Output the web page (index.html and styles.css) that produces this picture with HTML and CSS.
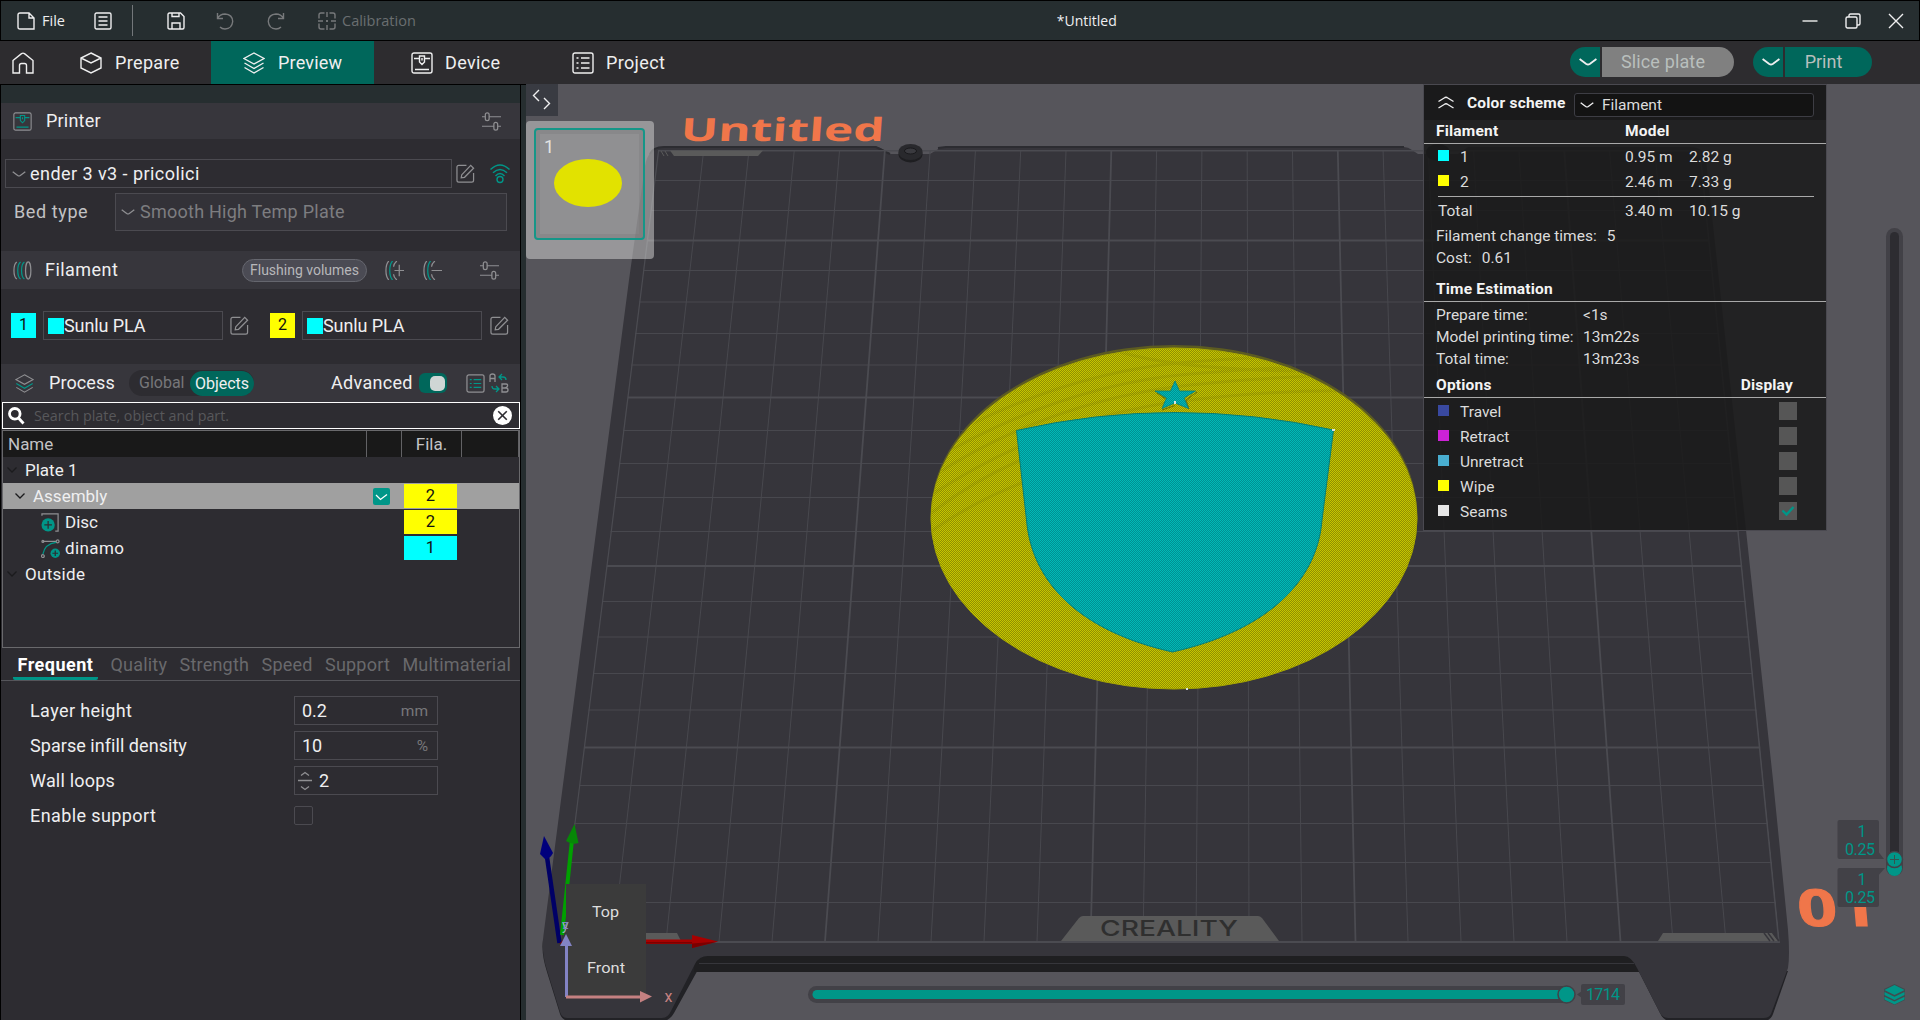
FILE: index.html
```html
<!DOCTYPE html>
<html lang="en">
<head>
<meta charset="utf-8">
<title>*Untitled</title>
<link rel="stylesheet" href="styles.css">
</head>
<body>
<svg width="0" height="0" class="defs">
  <defs>
    <symbol id="edit" viewBox="0 0 20 20"><path d="M11 1.500H3Q1 1.500 1 3.500V17Q1 19 3 19H16.500Q18.500 19 18.500 17V9.500M6 11.500L15.500 1.500L18.500 4.500L9 14L5.500 14.500Z" /></symbol>
    <symbol id="sliders" viewBox="0 0 20 20"><path d="M0 5H3M8 5H20M3.500 3Q3.500 1 5.500 1T7.500 3V7Q7.500 9 5.500 9T3.500 7ZM0 15H12M17 15H20M12.500 13Q12.500 11 14.500 11T16.500 13V17Q16.500 19 14.500 19T12.500 17Z"/></symbol>
    <symbol id="chev" viewBox="0 0 14 6"><path d="M.7.8L5.700 4.500Q7 5.300 8.300 4.500L13.300.8"/></symbol>
    <symbol id="layers" viewBox="0 0 22 22"><path d="M11 1L21 6.500L11 12L1 6.500Z"/><path class="accent" d="M1.500 11L11 16.500L20.500 11"/><path d="M1.500 15.500L11 21L20.500 15.500"/></symbol>
    <symbol id="machine" viewBox="0 0 22 22"><rect x="1" y="1" width="20" height="20" rx="2"/><path class="accent" d="M4 17.500H18M3 6.500H8.500M13.500 6.500H19M8.500 4H13.500V10L11 12.500L8.500 10ZM11 6V8.500"/></symbol>
    <symbol id="tree" viewBox="0 0 10 6"><path d="M.5.5L5 5L9.500.5"/></symbol>
  </defs>
</svg>

<header class="titlebar">
  <svg class="ic file-ic" viewBox="0 0 18 18"><path d="M1 3Q1 1 3 1H12L17 6V17H3Q1 17 1 15ZM12 1V6H17"/></svg>
  <span class="file">File</span>
  <svg class="ic menu-ic" viewBox="0 0 18 18"><rect x="1" y="1" width="16" height="16" rx="1.500"/><path d="M4.500 5H13.500M4.500 9H13.500M4.500 13H13.500"/></svg>
  <i class="sep"></i>
  <svg class="ic save-ic" viewBox="0 0 18 18"><path d="M1 2.500Q1 1 2.500 1H13.500L17 4.500V15.500Q17 17 15.500 17H2.500Q1 17 1 15.500ZM5 1V4.500H12V1M5 17V11H13V17"/></svg>
  <svg class="ic dim undo-ic" viewBox="0 0 18 18"><path d="M1.500 1V6.500H7M1.500 6.500Q4 2 9 2Q16.500 2.500 16.700 9.500Q16 16.800 9 17Q6 17 4 15"/></svg>
  <svg class="ic dim redo-ic" viewBox="0 0 18 18"><path d="M16.500 1V6.500H11M16.500 6.500Q14 2 9 2Q1.500 2.500 1.300 9.500Q2 16.800 9 17Q12 17 14 15"/></svg>
  <svg class="ic dim cal-ic" viewBox="0 0 18 18"><path d="M6.500 1H3Q1 1 1 3V6.500M11.500 1H15Q17 1 17 3V6.500M1 11.500V15Q1 17 3 17H6.500M17 11.500V15Q17 17 15 17H11.500M9 0V5M9 13V18M0 9H5M13 9H18M8 9H10M9 8V10"/></svg>
  <span class="cal">Calibration</span>
  <span class="doc">*Untitled</span>
  <div class="winbtns">
    <svg class="ic" viewBox="0 0 16 16"><path d="M0.500 8H15.500"/></svg>
    <svg class="ic" viewBox="0 0 16 16"><rect x="1" y="4" width="11" height="11" rx="1.500"/><path d="M4 4V2.500Q4 1 5.500 1H13.500Q15 1 15 2.500V10.500Q15 12 13.500 12H12"/></svg>
    <svg class="ic" viewBox="0 0 16 16"><path d="M1 1L15 15M15 1L1 15"/></svg>
  </div>
</header>

<nav class="tabs">
  <div class="tab home"><svg class="ic" viewBox="0 0 22 22"><path d="M1 8.500L9.500 1.600Q11 .6 12.500 1.600L21 8.500V21H14.500V13.500Q14.500 11.500 12.500 11.500H9.500Q7.500 11.500 7.500 13.500V21H1Z"/></svg></div>
  <div class="tab prep"><svg class="ic" viewBox="0 0 22 22"><path d="M11 1L21 6V16L11 21L1 16V6ZM1 6L11 11L21 6"/></svg><span>Prepare</span></div>
  <div class="tab active"><svg class="ic"><use href="#layers"/></svg><span>Preview</span></div>
  <div class="tab dev"><svg class="ic"><use href="#machine"/></svg><span>Device</span></div>
  <div class="tab proj"><svg class="ic" viewBox="0 0 22 22"><rect x="1" y="1" width="20" height="20" rx="2"/><path d="M4.500 6H6.500M9 6H17.500M4.500 11H6.500M9 11H17.500M4.500 16H6.500M9 16H17.500"/></svg><span>Project</span></div>
  <div class="actions">
    <div class="split"><b><svg class="ic"><use href="#chev"/></svg></b><span class="slice">Slice plate</span></div>
    <div class="split"><b><svg class="ic"><use href="#chev"/></svg></b><span class="print">Print</span></div>
  </div>
</nav>

<main class="body">
  <aside class="side">
    <div class="strip"></div>
    <div class="head printer">
      <svg class="ic g m19"><use href="#machine"/></svg><span>Printer</span><svg class="ic g m19 end"><use href="#sliders"/></svg>
    </div>
    <div class="row prow">
      <div class="box pbox"><svg class="ic g cv"><use href="#chev"/></svg><span>ender 3 v3 - pricolici</span></div>
      <svg class="ic g m19"><use href="#edit"/></svg>
      <svg class="ic wifi" viewBox="0 0 20 20"><path d="M.5 5.500Q10-3.500 19.500 5.500M3 8.800Q10 2 17 8.800M5.500 12Q10 7 14.500 12"/><circle cx="10" cy="15.500" r="3"/></svg>
    </div>
    <div class="row bedrow"><label>Bed type</label><div class="box bedbox"><svg class="ic g cv"><use href="#chev"/></svg><span>Smooth High Temp Plate</span></div></div>
    <div class="head fil">
      <svg class="ic g m19" viewBox="0 0 20 20"><path d="M4 1Q1 3 1 10T4 19"/><path class="accent" d="M8 1Q5 3 5 10T8 19M12 1Q9 3 9 10T12 19"/><ellipse cx="16" cy="10" rx="2.800" ry="9"/></svg>
      <span>Filament</span>
      <span class="flush">Flushing volumes</span>
      <svg class="ic g m19 addf" viewBox="0 0 20 20"><path d="M4 0Q1 3 1 10T4 20"/><path class="accent" d="M8 0Q5 3 5 10T8 20"/><path d="M12.500 0Q9 3 9 6M9 14Q9 17 12.500 20M10 10H20M15 4V16"/></svg>
      <svg class="ic g m19 delf" viewBox="0 0 20 20"><path d="M4 0Q1 3 1 10T4 20"/><path class="accent" d="M8 0Q5 3 5 10T8 20"/><path d="M12.500 0Q9 3 9 6M9 14Q9 17 12.500 20M9 10H20"/></svg>
      <svg class="ic g m19 slf"><use href="#sliders"/></svg>
    </div>
    <div class="row frow">
      <b class="sw cy">1</b><div class="box fb"><i></i><span>Sunlu PLA</span></div><svg class="ic g m19"><use href="#edit"/></svg>
      <b class="sw ye">2</b><div class="box fb"><i></i><span>Sunlu PLA</span></div><svg class="ic g m19"><use href="#edit"/></svg>
    </div>
    <div class="head proc">
      <svg class="ic g m19"><use href="#layers"/></svg><span>Process</span>
      <div class="seg"><span>Global</span><span class="on">Objects</span></div>
      <span class="adv">Advanced</span><i class="toggle"></i>
      <svg class="ic g m19 lst" viewBox="0 0 20 20"><rect x="1" y="1" width="18" height="18" rx="2"/><path class="accent" d="M4 6H6M8 6H16M4 10H6M8 10H16M4 14H6M8 14H16"/></svg>
      <svg class="ic g m20" viewBox="0 0 20 20"><path d="M1 9V3Q1 1 3.500 1T6 3V9M1 5.500H6M13 11H17Q19 11 18.500 13Q18 15 13.500 15H17Q19 15 19 17Q19 19 17 19H13Z"/><path class="accent" d="M13 1L10 4L13 7M10 4H14Q17 4 17 7M7 13L10 16L7 19M10 16H6Q3 16 3 13"/></svg>
    </div>
    <div class="search">
      <svg viewBox="0 0 17 18" class="mag"><circle cx="6.800" cy="6.800" r="5.300"/><path d="M10.500 11L15.500 16.500"/></svg>
      <span>Search plate, object and part.</span>
      <svg viewBox="0 0 20 20" class="clr"><circle cx="10" cy="10" r="10"/><path d="M5.500 5.500L14.500 14.500M14.500 5.500L5.500 14.500"/></svg>
    </div>
    <div class="table">
      <div class="tr th"><span class="c1">Name</span><span class="c2"></span><span class="c3">Fila.</span><span class="c4"></span></div>
      <div class="tr l0"><svg class="tv"><use href="#tree"/></svg><span class="c1">Plate 1</span></div>
      <div class="tr l1 sel"><svg class="tv"><use href="#tree"/></svg><span class="c1">Assembly</span><svg class="chk" viewBox="0 0 17 17"><rect width="17" height="17" rx="2"/><path d="M3 7L7.500 11.500L14 6.500"/></svg><b class="ye">2</b></div>
      <div class="tr l2"><svg class="ic g m19" viewBox="0 0 20 20"><path d="M1 3V1H18V19H15"/><circle class="dot" cx="7.500" cy="12.500" r="7"/><path class="dk" d="M3.500 12.500H11.500M7.500 8.500V16.500"/></svg><span class="c1">Disc</span><b class="ye">2</b></div>
      <div class="tr l2"><svg class="ic g m19" viewBox="0 0 20 20"><path d="M2 2.500H16"/><circle cx="2" cy="2.500" r="1"/><circle cx="17.500" cy="2.500" r="1.500"/><circle cx="2" cy="18" r="1.500"/><path class="accent" d="M2 16Q4 5 16 3.500"/><circle class="dot" cx="15" cy="15" r="5"/><path class="dk" d="M12 15H18M15 12V18"/></svg><span class="c1 sp2">dinamo</span><b class="cy">1</b></div>
      <div class="tr l0"><svg class="tv"><use href="#tree"/></svg><span class="c1 sp1">Outside</span></div>
    </div>
    <div class="ptabs"><span class="on">Frequent</span><span>Quality</span><span>Strength</span><span>Speed</span><span>Support</span><span>Multimaterial</span></div>
    <div class="form">
      <div class="fr"><label class="sp2">Layer height</label><div class="box in"><span>0.2</span><em>mm</em></div></div>
      <div class="fr"><label class="sp0">Sparse infill density</label><div class="box in"><span>10</span><em>%</em></div></div>
      <div class="fr"><label>Wall loops</label><div class="box in spin"><svg class="ic g" viewBox="0 0 14 20"><path d="M3 4.500L7 1.500L11 4.500M0 9.500H14M3 15.500L7 18.500L11 15.500"/></svg><span>2</span></div></div>
      <div class="fr"><label class="sp2">Enable support</label><i class="cb"></i></div>
    </div>
  </aside>

  <section class="view">
    <svg class="scene" viewBox="526 84 1394 936">
      <defs>
        <pattern id="py" width="2" height="2" patternUnits="userSpaceOnUse"><rect width="2" height="2" fill="#8f8f00"/><path fill="#c6c500" d="M0 0h1v1H0zM1 1h1v1H1z"/></pattern>
        <pattern id="pc" width="2" height="2" patternUnits="userSpaceOnUse"><rect width="2" height="2" fill="#008f92"/><path fill="#00bab6" d="M0 0h1v1H0zM1 1h1v1H1z"/></pattern>
        <clipPath id="bed"><path d="M658 150L1700.500 150L1780 943H559.500Z"/></clipPath>
        <clipPath id="disc"><ellipse cx="1174" cy="518.500" rx="242" ry="169.500"/></clipPath>
      </defs>
      <path fill="#222226" d="M543 940Q541 953 547 972L560 1014Q562 1020 568 1021H664Q670 1020 674 1013L700 966L1636 966L1660 1013Q1663 1020 1669 1021H1765Q1771 1020 1773 1014L1788 971Z"/>
      <path fill="#1f1f21" d="M694 956H1640V972H694Z"/>
      <path stroke="#36363b" d="M699 963.500H1634"/>
      <path fill="#36353b" d="M645 166Q648 147 664 147H876Q880 147 884 150L890 154H930L940 148Q943 147 948 147H1404Q1408 147 1412 150L1418 154H1458L1468 147H1690Q1704 147 1706 160L1773 780L1788 930Q1790 955 1788 968L1771 1014Q1769 1018 1764 1018H1668Q1663 1018 1660 1013L1637 968Q1631 956 1624 956H708Q699 956 695 964L671 1011Q668 1018 662 1018H567Q562 1018 560 1012L547 970Q541 952 543.500 935L561 800L629 280Z"/>
      <path stroke="#2c2c31" stroke-width="2" fill="none" d="M650 154Q653 147 664 147H876L890 154M938 148L946 147H1404"/>
      <g clip-path="url(#bed)" fill="none" stroke="#48484e">
        <path d="M703.600 151L613 941.500M748.900 151L666 941.500M794.200 151L719 941.500M839.500 151L772 941.500M930.100 151L878 941.500M975.400 151L931 941.500M1020.700 151L984 941.500M1066 151L1037 941.500M1156.600 151L1143 941.500M1201.900 151L1196 941.500M1247.200 151L1249 941.500M1292.500 151L1302 941.500M1383.100 151L1408 941.500M1428.400 151L1461 941.500M1473.700 151L1514 941.500M1519 151L1567 941.500M1609.600 151L1673 941.500M1654.900 151L1726 941.500"/>
        <path d="M540 180.500H1800M540 210.500H1800M540 270.500H1800M540 302H1800M540 333.500H1800M540 365H1800M540 430.500H1800M540 463.500H1800M540 497.500H1800M540 531.500H1800M540 601.500H1800M540 637H1800M540 673.500H1800M540 710H1800M540 785.500H1800M540 823.500H1800M540 862.500H1800M540 902.500H1800"/>
        <path stroke-width="1.800" stroke="#4b4b51" d="M658.300 151L560 941.500M884.800 151L825 941.500M1111.300 151L1090.500 941.500M1337.800 151L1355.500 941.500M1564.300 151L1620.500 941.500M1700.200 151L1779 941.500M540 150.500H1800M540 240.500H1800M540 397.500H1800M540 566H1800M540 747.500H1800M540 942H1800"/>
      </g>
      <path fill="#5a5a5a" d="M670 150.500H763L758 156H674Z"/>
      <path stroke="#5a5a5a" d="M661 151L664 156M665 151L668 156"/>
      <ellipse cx="910.500" cy="154" rx="12" ry="8.500" fill="#1e1e21"/><ellipse cx="910.500" cy="152" rx="12" ry="8" fill="#29292d"/><ellipse cx="910.500" cy="151" rx="6" ry="3" fill="#3a3a3f" stroke="#1a1a1d"/>
      <ellipse cx="1438" cy="152.500" rx="12" ry="8.500" fill="#222226"/>
      <path fill="#5a5a5a" d="M1061 941L1079 918Q1081 916 1083 916H1258Q1260 916 1262 918L1279 941ZM645 933H677L681 941H645ZM1658 941L1663 933H1772L1778 941Z"/>
      <path stroke="#36353b" stroke-width="1.500" d="M1764 933L1770 941M1768 933L1774 941M1773 933L1779 941"/>
      <text x="1100" y="935.500" class="brand" textLength="138" lengthAdjust="spacingAndGlyphs">CREALITY</text>
      <text class="t3d" transform="translate(680 141) skewX(-4)" font-size="32" textLength="204" lengthAdjust="spacingAndGlyphs">Untitled</text>
      <text class="t3d" transform="translate(1799 925.500) skewX(5)" font-size="51" stroke="#f0764a" textLength="79" lengthAdjust="spacingAndGlyphs">01</text>

      <ellipse cx="1174" cy="516" rx="243.500" ry="171" fill="#5c5b22"/>
      <ellipse cx="1174" cy="518.500" rx="243" ry="170.500" fill="url(#py)" stroke="#a5a500" stroke-width="1"/>
      <g clip-path="url(#disc)" fill="none" stroke="#6e6e00" stroke-width="3" opacity=".16"><path d="M930 478Q1050 400 1190 385T1430 380M930 496Q1050 416 1190 400T1430 396M930 462Q1060 385 1190 374T1430 366M930 446Q1060 372 1190 362T1430 354M1120 352Q1200 376 1400 370M930 514Q1000 460 1080 440M930 532Q990 490 1060 470"/></g>
      <path fill="url(#pc)" stroke="#067f78" d="M1016.500 430.500Q1095 412.500 1175 412.500T1333.500 430L1322 520C1317 585 1262 632 1172.500 652C1083 632 1032 585 1026.500 520Z"/>
      <path fill="none" stroke="#6e7100" stroke-width="1" d="M1162 410L1175 405.500M1157 393L1165 398.500M1189 409L1186 400L1197 392"/>
      <path fill="url(#pc)" stroke="#067f78" stroke-width=".8" d="M1175 381L1179.500 391H1195.500L1184 398L1188.500 408.500L1175 403L1162 408.500L1166.500 398L1155 391H1170.500Z"/>
      <path fill="#d9e4e0" d="M1174 401h2v3h-2zM1332 429h3v2h-3zM1186 688h2v2h-2z"/>

      <path stroke="#000066" stroke-width="4.500" d="M559.500 943L547 857"/><path fill="#00007c" d="M544 836L553 853Q550 859 545 859L540 854Z"/>
      <path stroke="#00a000" stroke-width="4" d="M562 935L572 840"/><path fill="#078707" d="M574.500 824L578.500 843Q572 845 566 841Z"/>
      <path fill="#a80000" d="M646 939.500H692V935L718 941.500L692 948V944H646Z"/><path fill="#7c0000" d="M646 942H692V948L718 941.500L692 943.500H646ZM559 944l4-4v3z"/>
      <path fill="#3b3b3b" d="M566 884H646V997H566Z"/>
      <path stroke="#8383c4" stroke-width="3" d="M566.500 997V944"/><path fill="#8383c4" d="M566 934L572 946H560Z"/>
      <path stroke="#c58181" stroke-width="3" d="M566 997H642"/><path fill="#c58181" d="M652 996.500L640 991V1002.500Z"/>
      <text class="cube" x="592" y="916.500" textLength="27" lengthAdjust="spacingAndGlyphs">Top</text>
      <text class="cube" x="587" y="973" textLength="38" lengthAdjust="spacingAndGlyphs">Front</text>
      <text x="664.500" y="1002" font-size="16" fill="#c58181">x</text><text x="562" y="930" font-size="14" fill="#9db8b8">y</text><text x="562.500" y="929" font-size="12" fill="#8383c4">z</text>

      <g class="hs"><rect x="808" y="986" width="767" height="17" rx="8.500" fill="#424147"/><rect x="812.500" y="990" width="756" height="9" rx="4.500" fill="#009688"/><circle cx="1566.500" cy="994.500" r="8.500" fill="#009688" stroke="#424147" stroke-width="1.500"/>
      <path fill="#424147" d="M1577 994.500L1582 991V998Z"/><rect x="1581" y="984" width="44" height="21" rx="2" fill="#424147"/><text x="1586" y="1000" class="tv2" textLength="34">1714</text></g>
      <rect x="1886" y="228" width="17" height="648" rx="8.500" fill="#424147"/><rect x="1890" y="232" width="9" height="636" rx="4.500" fill="#2d2c31"/>
      <circle cx="1894.500" cy="868.500" r="7.500" fill="#009688"/><circle cx="1894.500" cy="859.500" r="8" fill="#009688" stroke="#424147" stroke-width="1.500"/><path stroke="#35534f" d="M1890 859.500H1899M1894.500 855V864"/>
      <path fill="#424147" d="M1877 850L1884 859H1877ZM1877 877L1885 868H1877Z"/><rect x="1837.500" y="820" width="41.500" height="39" rx="2" fill="#424147"/><rect x="1837.500" y="868" width="41.500" height="39" rx="2" fill="#424147"/>
      <g class="tv2"><text x="1857.500" y="836.500">1</text><text x="1845" y="854.500" textLength="30">0.25</text><text x="1857.500" y="884.500">1</text><text x="1845" y="902.500" textLength="30">0.25</text></g>
      <path fill="#424b4e" d="M1894.500 984L1905 989V1000L1894.500 1005L1884 1000V989Z"/>
      <path fill="#009688" d="M1894.500 985L1904.500 990L1894.500 995L1884.500 990ZM1884.500 992L1894.500 996.700L1904.500 992V995L1894.500 1000L1884.500 995ZM1884.500 996.700L1894.500 1001.500L1904.500 996.700V999.500L1894.500 1004.500L1884.500 999.500Z"/>
    </svg>
    <div class="collapse"><svg class="ic" viewBox="0 0 32 32"><path d="M13 6L7.500 11.500L13 17M18 14L23.500 19.500L18 25"/></svg></div>
    <div class="thumb"><div class="inner"><span>1</span><i></i></div></div>

    <div class="legend">
      <div class="lt"><svg class="ic" viewBox="0 0 16 13"><path d="M.5 5.500L7 1.500Q8 1 9 1.500L15.500 5.500M.5 12L7 8Q8 7.500 9 8L15.500 12"/></svg><b>Color scheme</b><div class="ls"><svg class="ic"><use href="#chev"/></svg><span>Filament</span></div></div>
      <div class="lh fm"><b>Filament</b><b>Model</b></div>
      <div class="lr"><i class="cy"></i><span class="n">1</span><span class="v">0.95 m</span><span>2.82 g</span></div>
      <div class="lr last"><i class="ye"></i><span class="n">2</span><span class="v">2.46 m</span><span>7.33 g</span></div>
      <div class="lr tot"><span class="n">Total</span><span class="v">3.40 m</span><span>10.15 g</span></div>
      <div class="lp fct"><span>Filament change times:</span><span>5</span></div>
      <div class="lp"><span>Cost:</span><span>0.61</span></div>
      <div class="lh te"><b>Time Estimation</b></div>
      <div class="tm"><span>Prepare time:</span><span>&lt;1s</span></div>
      <div class="tm"><span>Model printing time:</span><span>13m22s</span></div>
      <div class="tm"><span>Total time:</span><span>13m23s</span></div>
      <div class="lh op"><b>Options</b><b>Display</b></div>
      <div class="lr o"><i class="travel"></i><span class="n">Travel</span><u></u></div>
      <div class="lr o"><i class="retract"></i><span class="n">Retract</span><u></u></div>
      <div class="lr o"><i class="unretract"></i><span class="n">Unretract</span><u></u></div>
      <div class="lr o"><i class="ye"></i><span class="n">Wipe</span><u></u></div>
      <div class="lr o"><i class="seams"></i><span class="n">Seams</span><u><svg viewBox="0 0 18 18"><path d="M3.500 8.500L7.500 12.500L14.500 5"/></svg></u></div>
    </div>
  </section>
</main>
</body>
</html>
```
FILE: styles.css
```css
* { box-sizing: border-box; }
body { margin: 0; width: 1920px; height: 1020px; overflow: hidden; background: #2d2c31; color: #efeff0; font: 18px/24px Roboto, "Noto Sans", sans-serif; display: flex; flex-direction: column; }
svg { display: block; flex: none; }
i, em { font-style: normal; }
span, label, b { white-space: nowrap; }
.defs { position: absolute; }
.ic { fill: none; stroke: #efeff0; stroke-width: 1.4; }
.ic.g { stroke: #8f8f92; stroke-width: 1.3; --accent: #009688; }
.ic.dim { stroke: #77797b; }
.accent { stroke: var(--accent); }
.m19 { width: 19px; height: 19px; }
.m20 { width: 20px; height: 20px; }
.cy { background: #00ffff; }
.ye { background: #ffff00; }

.titlebar { height: 41px; flex: none; background: #262e30; border: 1px solid #000; display: flex; align-items: center; position: relative; font: 15px/20px "Open Sans", "Noto Sans", sans-serif; padding-left: 16px; }
.titlebar > .ic { width: 18px; height: 18px; }
.file { margin-left: 7px; width: 53px; font-size: 14.500px; }
.menu-ic { margin-left: -1px; }
.sep { width: 1px; height: 31px; background: #73777a; margin: 0 34px 0 20px; }
.undo-ic { margin-left: 31px; }
.redo-ic { margin-left: 33px; }
.cal-ic { margin-left: 33px; }
.cal { margin-left: 6px; color: #6a6e70; font-size: 14.500px; }
.doc { margin-left: 641px; font-size: 14px; }
.winbtns { margin-left: auto; display: flex; gap: 27px; padding-right: 15px; }
.winbtns .ic { width: 16px; height: 16px; }

.tabs { height: 43px; flex: none; background: #2d2c2f; display: flex; }
.tab { display: flex; align-items: center; }
.tab .ic { width: 22px; height: 22px; margin-right: 13px; }
.tab span { letter-spacing: .35px; }
.home { width: 80px; padding-left: 12px; }
.prep { width: 131px; }
.active { width: 163px; background: #00675b; padding-left: 32px; }
.active span { letter-spacing: .2px; }
.dev { width: 198px; padding-left: 37px; }
.dev .ic, .proj .ic { margin-right: 12px; }
.actions { margin-left: auto; display: flex; gap: 19px; padding: 6px 48px 0 0; }
.split { display: flex; gap: 2px; height: 30px; color: #b9bfbd; }
.split b { width: 30px; background: #00675b; border-radius: 15px 0 0 15px; display: flex; align-items: center; padding-left: 8px; }
.split b .ic { width: 20px; height: 8px; }
.split span { line-height: 30px; text-align: center; border-radius: 0 15px 15px 0; }
.slice { width: 132px; background: #808080; padding-right: 10px; letter-spacing: .15px; }
.print { width: 87px; background: #00675b; padding-right: 10px; }

.body { display: flex; flex: 1; }
.side { width: 526px; border: solid #000; border-width: 1px 0 0 1px; display: flex; flex-direction: column; background: linear-gradient(90deg, transparent 519px, #000 519px, #000 520px, #262e30 520px); padding-right: 6px; }
.strip { height: 18px; background: #262e30; }
.head { height: 38px; background: #37363c; display: flex; align-items: center; padding-left: 12px; }
.head.printer { height: 36px; }
.head > span:first-of-type { margin-left: 13px; letter-spacing: .2px; }
.head.printer > span:first-of-type { margin-left: 14px; }
.end { margin-left: auto; margin-right: 19px; }
.box { border: 1px solid #4b4a50; height: 29px; display: flex; align-items: center; }
.cv { width: 14px; height: 6px; }
.prow { margin: 20px 0 5px 4px; display: flex; align-items: center; }
.pbox { width: 447px; padding-left: 6px; margin-right: 4px; gap: 4px; }
.pbox span { letter-spacing: .45px; }
.wifi { width: 20px; height: 20px; margin-left: 15px; stroke: #009688; }
.bedrow { display: flex; align-items: center; padding-left: 13px; height: 38px; color: #c2c2c4; }
.bedrow label { width: 101px; letter-spacing: .6px; }
.bedbox { width: 392px; height: 38px; background: #333238; color: #7d7d80; padding-left: 5px; gap: 5px; letter-spacing: .25px; }
.fil { margin-top: 20px; }
.fil > span:first-of-type { width: 197px; letter-spacing: .45px; }
.flush { border: 1px solid #65666e; background: #4b4b54; color: #b7b7ba; border-radius: 12px; height: 23px; width: 125px; font-size: 14px; line-height: 21px; text-align: center; }
.addf { margin-left: 18px; }
.delf { margin-left: 19px; }
.slf { margin-left: 38px; }
.frow { margin: 22px 0 24px 10px; display: flex; align-items: center; height: 29px; }
.sw { width: 25px; height: 25px; color: #111; font-weight: 400; font-size: 16px; text-align: center; line-height: 24px; margin-right: 7px; }
.fb { width: 180px; padding-left: 4px; margin-right: 7px; letter-spacing: -.1px; }
.fb i { width: 16px; height: 16px; background: #00ffff; }
.frow svg + .sw { margin-left: 21px; }
.frow svg:last-child { margin-left: 1px; }
.proc > span:first-of-type { margin-left: 15px; width: 80px; letter-spacing: .1px; }
.proc { padding-left: 14px; }
.seg { display: flex; background: #2d2c31; border-radius: 13px; height: 26px; width: 125px; font-size: 16px; align-items: center; color: #77777a; padding-left: 10px; }
.seg .on { margin-left: auto; width: 64px; height: 25px; line-height: 25px; border-radius: 13px; background: #00675b; color: #efeff0; text-align: center; }
.adv { margin-left: 77px; width: 88px; letter-spacing: .3px; }
.toggle { width: 28px; height: 20px; background: #00675b; border-radius: 6px; padding: 3px 2px 0 11px; }
.toggle::after { content: ""; display: block; width: 15px; height: 15px; border-radius: 5px; background: #cfd6d5; }
.lst { margin: 0 4px 0 19px; }
.search { margin-left: 1px; width: 518px; height: 27px; border: 1.500px solid #fff; display: flex; align-items: center; padding-left: 5px; font: 14.300px/22px "Open Sans", sans-serif; color: #58585b; }
.mag { width: 17px; height: 18px; fill: none; stroke: #fff; stroke-width: 2.800; margin-right: 9px; }
.clr { width: 19px; height: 19px; fill: #fff; margin: 0 7px 0 auto; }
.clr path { stroke: #2d2c31; stroke-width: 1.700; }
.table { margin: 1px 0 0 1px; width: 518px; height: 218px; border: 1px solid #69696c; }
.tr { height: 26px; display: flex; align-items: center; font-size: 17px; }
.tr .c1 { flex: 1; }
.tr b { width: 53px; height: 24px; margin-right: 62px; color: #111; font-weight: 400; text-align: center; line-height: 24px; font-size: 16.500px; }
.th { background: #191919; color: #c3c3c5; align-items: stretch; line-height: 26px; }
.th .c1 { padding-left: 5px; }
.th .c2, .th .c3, .th .c4 { border-left: 1px solid #626265; }
.th .c2 { width: 35px; }
.th .c3 { width: 60px; text-align: center; }
.th .c4 { width: 58px; border-right: 1px solid #626265; }
.tv { width: 10px; height: 6px; fill: none; stroke: #1b1b1d; stroke-width: 1.300; }
.l0 { padding-left: 4px; }
.l0 .c1 { padding-left: 8px; }
.l1 { padding-left: 12px; }
.l1 .c1 { padding-left: 8px; }
.sel { background: #a0a0a0; }
.chk { width: 17px; height: 17px; margin-right: 14px; fill: #009688; }
.chk path { fill: none; stroke: #fff; stroke-width: 1.300; }
.l2 { padding-left: 38px; }
.l2 .c1 { padding-left: 5px; }
.dot { fill: #009688; stroke: none; }
.dk { stroke: #2d2c31; }
.sp1 { letter-spacing: .3px; }
.ptabs { display: flex; height: 33px; border-bottom: 1px solid #55555a; padding: 3px 9px 0 12px; color: #69696c; justify-content: space-between; letter-spacing: .2px; line-height: 28px; }
.ptabs span:not(.on) { margin-left: -1px; }
.ptabs .on { color: #fff; font-weight: 700; width: 85px; height: 29px; text-align: center; border-bottom: 3px solid #009688; border-radius: 0 0 2px 2px; letter-spacing: .5px; }
.form { padding: 15px 0 0 29px; display: flex; flex-direction: column; gap: 6px; }
.fr { display: flex; align-items: center; height: 29px; }
.fr label { width: 264px; letter-spacing: .2px; }
.fr .sp0 { letter-spacing: .05px; }
.fr .sp2, .l2 .sp2 { letter-spacing: .4px; }
.in { width: 144px; padding: 0 9px 0 7px; justify-content: space-between; }
.in em { color: #77777a; font-size: 15.500px; }
.spin { justify-content: flex-start; padding-left: 3px; gap: 7px; }
.spin .ic { width: 14px; height: 20px; }
.cb { width: 19px; height: 19px; border: 1px solid #4b4a50; border-radius: 2px; }

.view { flex: 1; position: relative; background: #56555b; overflow: hidden; }
.scene { width: 1394px; height: 936px; }
.t3d { font-family: "Open Sans", sans-serif; font-weight: 700; fill: #f0764a; }
.brand { font: 500 21px Inter, sans-serif; fill: #2f2f2f; }
.cube { font-size: 14px; fill: #dedede; }
.tv2 { font-size: 16px; fill: #009688; }
.collapse { position: absolute; left: 0; top: 0; width: 32px; height: 32px; background: #393b42; }
.thumb { position: absolute; left: 0; top: 37px; width: 128px; height: 138px; border-radius: 4px; background: rgba(215, 215, 215, .5); padding: 7px 8px; }
.inner { width: 111px; height: 112px; border: 2px solid #159688; border-radius: 4px; box-shadow: inset 0 0 0 4px rgba(120, 120, 120, .3); background: rgba(120, 120, 120, .2); padding: 6px 0 0 8px; color: #e3e3e3; }
.inner span { display: block; line-height: 22px; }
.inner i { display: block; width: 68px; height: 48px; border-radius: 50%; background: #e2e200; margin: 1px 0 0 10px; }

.legend { position: absolute; left: 897px; top: 0; width: 404px; height: 447px; border: 1px solid #4a4950; background: rgba(26, 26, 26, .86); font-size: 15.500px; line-height: 22px; color: #dcdcdc; display: flex; flex-direction: column; }
.legend b { color: #f4f4f4; font-weight: 700; letter-spacing: .2px; }
.lt { height: 35px; background: #1a1a1b; display: flex; align-items: center; padding: 0 12px 0 14px; }
.lt .ic { width: 16px; height: 13px; margin-right: 13px; }
.ls { margin: 4px 0 0 auto; width: 240px; height: 24px; border: 1px solid #3d3d44; border-radius: 3px; background: #131313; display: flex; align-items: center; padding-left: 5px; }
.lt .ls .ic { width: 14px; height: 6px; margin-right: 8px; }
.lh { border-bottom: 1px solid #a9a9a9; padding-left: 12px; display: flex; }
.fm { height: 24px; }
.fm b:first-child { width: 189px; }
.lr { height: 25px; display: flex; align-items: center; padding-left: 14px; position: relative; }
.lr i { width: 11px; height: 11px; margin-right: 11px; margin-top: -2px; }
.lr .n { width: 165px; }
.lr .v { width: 64px; }
.lr.tot { height: 28px; border-top: 1px solid #a9a9a9; margin: 2px 12px 0 14px; padding-left: 0; }
.lr.tot .n { width: 187px; }
.lp, .tm { height: 22px; padding-left: 12px; display: flex; gap: 10px; }
.fct { margin-top: 1px; }
.te { height: 33px; padding-top: 9px; }
.tm span:first-child { width: 137px; }
.te + .tm { margin-top: 2px; }
.op { height: 28px; padding-top: 4px; justify-content: space-between; padding-right: 33px; margin-bottom: 1px; }
.o .n { flex: 1; }
.o u { width: 18px; height: 18px; background: #565656; margin-right: 29px; margin-top: -1px; }
.o u svg { fill: none; stroke: #009688; stroke-width: 2.400; }
.travel { background: #3949a0; }
.retract { background: #cd22d6; }
.unretract { background: #49aed0; }
.seams { background: #e6e6e6; }
```
